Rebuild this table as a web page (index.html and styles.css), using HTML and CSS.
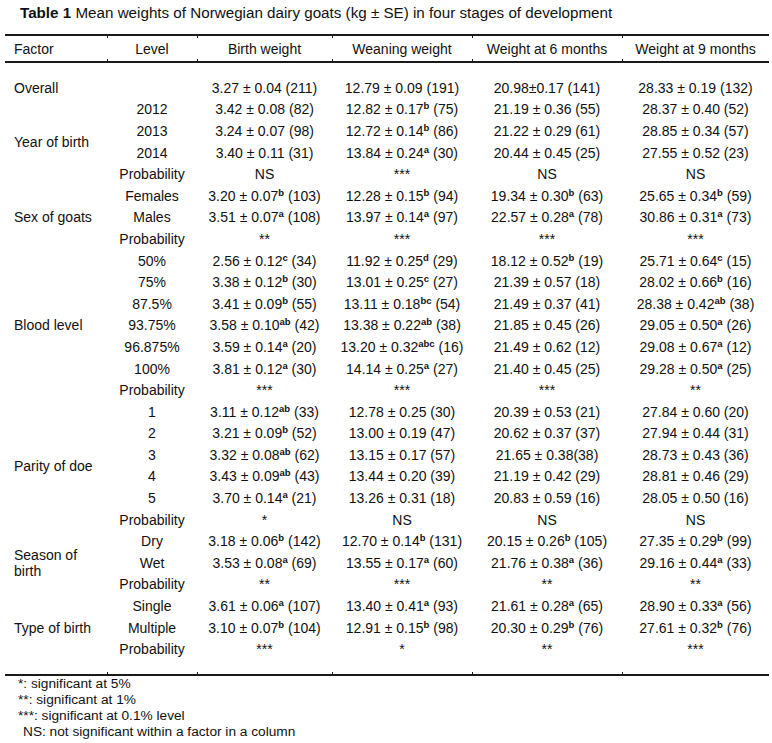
FILE: index.html
```html
<!DOCTYPE html>
<html lang="en">
<head>
<meta charset="utf-8">
<title>Table 1</title>
<link rel="stylesheet" href="styles.css">
</head>
<body>
<div class="page">
  <p class="caption"><b>Table 1</b> Mean weights of Norwegian dairy goats (kg ± SE) in four stages of development</p>
  <table class="data">
    <colgroup>
      <col class="c-factor"><col class="c-level"><col class="c-birth"><col class="c-wean"><col class="c-six"><col class="c-nine">
    </colgroup>
    <thead>
      <tr>
        <th class="factor">Factor</th>
        <th class="tick">Level</th>
        <th class="tick">Birth weight</th>
        <th class="tick">Weaning weight</th>
        <th class="tick">Weight at 6 months</th>
        <th class="tick">Weight at 9 months</th>
      </tr>
    </thead>
    <tbody>
      <tr class="gap"><td colspan="6"></td></tr>
      <tr><td class="factor">Overall</td><td></td><td>3.27 ± 0.04 (211)</td><td>12.79 ± 0.09 (191)</td><td>20.98±0.17 (141)</td><td>28.33 ± 0.19 (132)</td></tr>

      <tr><td class="factor" rowspan="4">Year of birth</td><td>2012</td><td>3.42 ± 0.08 (82)</td><td>12.82 ± 0.17<sup>b</sup> (75)</td><td>21.19 ± 0.36 (55)</td><td>28.37 ± 0.40 (52)</td></tr>
      <tr><td>2013</td><td>3.24 ± 0.07 (98)</td><td>12.72 ± 0.14<sup>b</sup> (86)</td><td>21.22 ± 0.29 (61)</td><td>28.85 ± 0.34 (57)</td></tr>
      <tr><td>2014</td><td>3.40 ± 0.11 (31)</td><td>13.84 ± 0.24<sup>a</sup> (30)</td><td>20.44 ± 0.45 (25)</td><td>27.55 ± 0.52 (23)</td></tr>
      <tr><td>Probability</td><td>NS</td><td>***</td><td>NS</td><td>NS</td></tr>

      <tr><td class="factor" rowspan="3">Sex of goats</td><td>Females</td><td>3.20 ± 0.07<sup>b</sup> (103)</td><td>12.28 ± 0.15<sup>b</sup> (94)</td><td>19.34 ± 0.30<sup>b</sup> (63)</td><td>25.65 ± 0.34<sup>b</sup> (59)</td></tr>
      <tr><td>Males</td><td>3.51 ± 0.07<sup>a</sup> (108)</td><td>13.97 ± 0.14<sup>a</sup> (97)</td><td>22.57 ± 0.28<sup>a</sup> (78)</td><td>30.86 ± 0.31<sup>a</sup> (73)</td></tr>
      <tr><td>Probability</td><td>**</td><td>***</td><td>***</td><td>***</td></tr>

      <tr><td class="factor" rowspan="7">Blood level</td><td>50%</td><td>2.56 ± 0.12<sup>c</sup> (34)</td><td>11.92 ± 0.25<sup>d</sup> (29)</td><td>18.12 ± 0.52<sup>b</sup> (19)</td><td>25.71 ± 0.64<sup>c</sup> (15)</td></tr>
      <tr><td>75%</td><td>3.38 ± 0.12<sup>b</sup> (30)</td><td>13.01 ± 0.25<sup>c</sup> (27)</td><td>21.39 ± 0.57 (18)</td><td>28.02 ± 0.66<sup>b</sup> (16)</td></tr>
      <tr><td>87.5%</td><td>3.41 ± 0.09<sup>b</sup> (55)</td><td>13.11 ± 0.18<sup>bc</sup> (54)</td><td>21.49 ± 0.37 (41)</td><td>28.38 ± 0.42<sup>ab</sup> (38)</td></tr>
      <tr><td>93.75%</td><td>3.58 ± 0.10<sup>ab</sup> (42)</td><td>13.38 ± 0.22<sup>ab</sup> (38)</td><td>21.85 ± 0.45 (26)</td><td>29.05 ± 0.50<sup>a</sup> (26)</td></tr>
      <tr><td>96.875%</td><td>3.59 ± 0.14<sup>a</sup> (20)</td><td>13.20 ± 0.32<sup>abc</sup> (16)</td><td>21.49 ± 0.62 (12)</td><td>29.08 ± 0.67<sup>a</sup> (12)</td></tr>
      <tr><td>100%</td><td>3.81 ± 0.12<sup>a</sup> (30)</td><td>14.14 ± 0.25<sup>a</sup> (27)</td><td>21.40 ± 0.45 (25)</td><td>29.28 ± 0.50<sup>a</sup> (25)</td></tr>
      <tr><td>Probability</td><td>***</td><td>***</td><td>***</td><td>**</td></tr>

      <tr><td class="factor" rowspan="6">Parity of doe</td><td>1</td><td>3.11 ± 0.12<sup>ab</sup> (33)</td><td>12.78 ± 0.25 (30)</td><td>20.39 ± 0.53 (21)</td><td>27.84 ± 0.60 (20)</td></tr>
      <tr><td>2</td><td>3.21 ± 0.09<sup>b</sup> (52)</td><td>13.00 ± 0.19 (47)</td><td>20.62 ± 0.37 (37)</td><td>27.94 ± 0.44 (31)</td></tr>
      <tr><td>3</td><td>3.32 ± 0.08<sup>ab</sup> (62)</td><td>13.15 ± 0.17 (57)</td><td>21.65 ± 0.38(38)</td><td>28.73 ± 0.43 (36)</td></tr>
      <tr><td>4</td><td>3.43 ± 0.09<sup>ab</sup> (43)</td><td>13.44 ± 0.20 (39)</td><td>21.19 ± 0.42 (29)</td><td>28.81 ± 0.46 (29)</td></tr>
      <tr><td>5</td><td>3.70 ± 0.14<sup>a</sup> (21)</td><td>13.26 ± 0.31 (18)</td><td>20.83 ± 0.59 (16)</td><td>28.05 ± 0.50 (16)</td></tr>
      <tr><td>Probability</td><td>*</td><td>NS</td><td>NS</td><td>NS</td></tr>

      <tr><td class="factor" rowspan="3">Season of birth</td><td>Dry</td><td>3.18 ± 0.06<sup>b</sup> (142)</td><td>12.70 ± 0.14<sup>b</sup> (131)</td><td>20.15 ± 0.26<sup>b</sup> (105)</td><td>27.35 ± 0.29<sup>b</sup> (99)</td></tr>
      <tr><td>Wet</td><td>3.53 ± 0.08<sup>a</sup> (69)</td><td>13.55 ± 0.17<sup>a</sup> (60)</td><td>21.76 ± 0.38<sup>a</sup> (36)</td><td>29.16 ± 0.44<sup>a</sup> (33)</td></tr>
      <tr><td>Probability</td><td>**</td><td>***</td><td>**</td><td>**</td></tr>

      <tr><td class="factor" rowspan="3">Type of birth</td><td>Single</td><td>3.61 ± 0.06<sup>a</sup> (107)</td><td>13.40 ± 0.41<sup>a</sup> (93)</td><td>21.61 ± 0.28<sup>a</sup> (65)</td><td>28.90 ± 0.33<sup>a</sup> (56)</td></tr>
      <tr><td>Multiple</td><td>3.10 ± 0.07<sup>b</sup> (104)</td><td>12.91 ± 0.15<sup>b</sup> (98)</td><td>20.30 ± 0.29<sup>b</sup> (76)</td><td>27.61 ± 0.32<sup>b</sup> (76)</td></tr>
      <tr><td>Probability</td><td>***</td><td>*</td><td>**</td><td>***</td></tr>

      <tr class="end"><td></td><td class="tick"></td><td class="tick"></td><td class="tick"></td><td class="tick"></td><td class="tick"></td></tr>
    </tbody>
  </table>
  <div class="notes">
    <p>*: significant at 5%</p>
    <p>**: significant at 1%</p>
    <p>***: significant at 0.1% level</p>
    <p class="ns">NS: not significant within a factor in a column</p>
  </div>
</div>
</body>
</html>
```

FILE: styles.css
```css
html, body {
  margin: 0;
  padding: 0;
  background: #ffffff;
}

.page {
  font-family: "Liberation Sans", Arial, sans-serif;
  color: #111111;
  font-size: 14px;
}

.caption {
  margin: 0;
  padding: 5px 0 0 20px;
  line-height: 16px;
  font-size: 15.2px;
}

.caption b {
  font-weight: bold;
}

.data {
  margin: 13px 0 0 5px;
  width: 764px;
  table-layout: fixed;
  border-collapse: separate;
  border-spacing: 0;
}

.c-factor { width: 102px; }
.c-level { width: 90px; }
.c-birth { width: 135px; }
.c-wean { width: 140px; }
.c-six { width: 150px; }
.c-nine { width: 147px; }

.data th {
  font-weight: normal;
  text-align: center;
  height: 25px;
  padding: 0;
  line-height: 16px;
  border-top: 2px solid #1a1a1a;
  border-bottom: 2px solid #1a1a1a;
  box-sizing: content-box;
  vertical-align: middle;
  white-space: nowrap;
}

.data td {
  text-align: center;
  height: 21.6px;
  padding: 0;
  line-height: 16px;
  vertical-align: middle;
  white-space: nowrap;
}

.data .factor {
  text-align: left;
  padding-left: 9px;
  padding-right: 10px;
  white-space: normal;
}

.data tr.gap td {
  height: 14px;
}

.data tr.end td {
  height: 14px;
  border-bottom: 2px solid #1a1a1a;
}

.tick {
  position: relative;
}

.data th.tick::before,
.data th.tick::after,
.data tr.end td.tick::after {
  content: "";
  position: absolute;
  left: 0;
  width: 1px;
  height: 2px;
  background: #1a1a1a;
}

.data th.tick::before {
  top: 0;
}

.data th.tick::after,
.data tr.end td.tick::after {
  bottom: 0;
}

sup {
  font-size: 9.5px;
  font-weight: bold;
  line-height: 0;
  vertical-align: 5px;
}

.notes {
  padding-left: 18px;
  font-size: 13.7px;
  line-height: 16px;
}

.notes p {
  margin: 0;
}

.notes .ns {
  padding-left: 5px;
}
```
